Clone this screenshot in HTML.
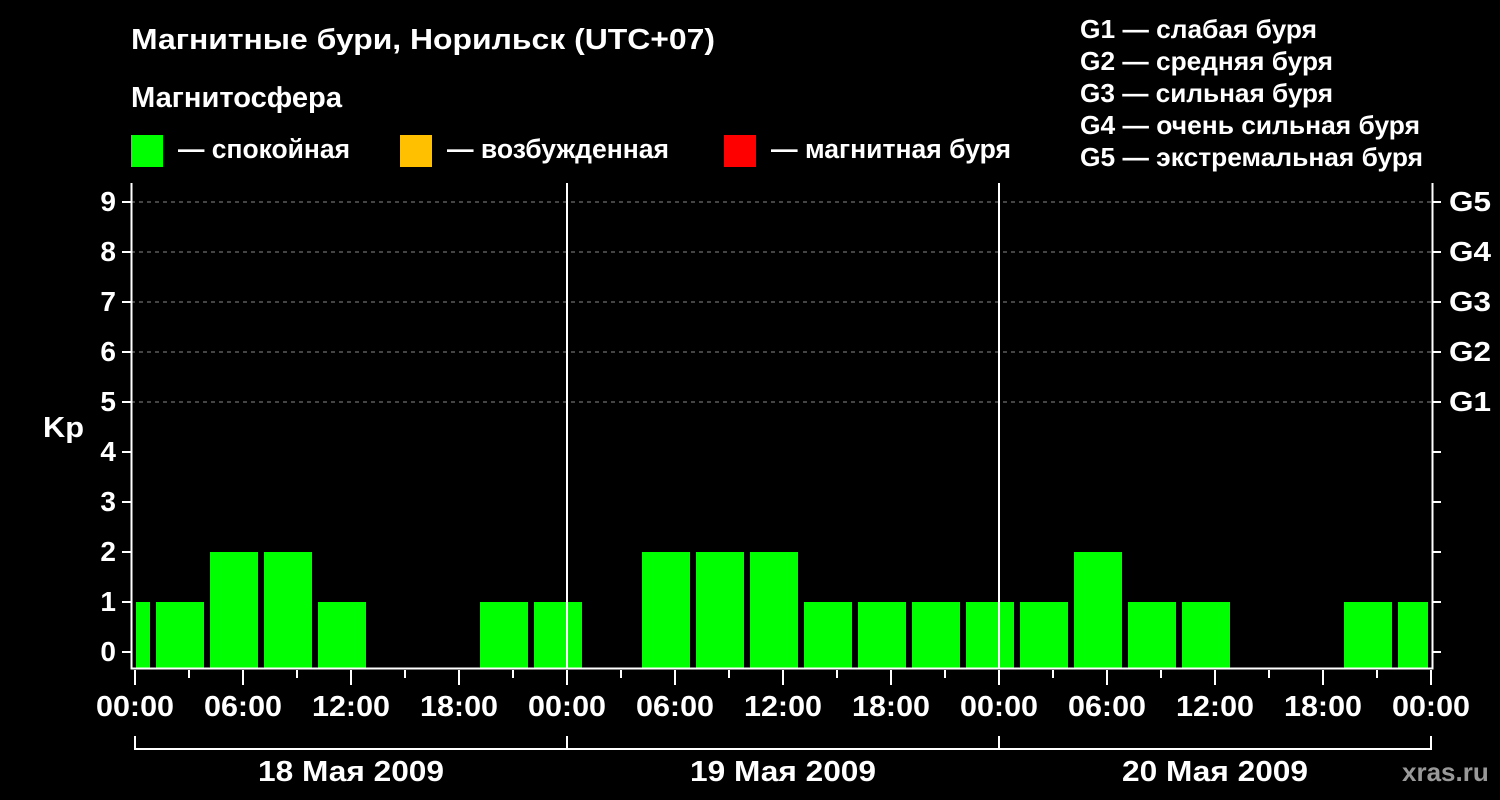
<!DOCTYPE html>
<html><head><meta charset="utf-8"><style>html,body{margin:0;padding:0;background:#000}svg{display:block}</style></head><body>
<svg width="1500" height="800" xmlns="http://www.w3.org/2000/svg" font-family="Liberation Sans, sans-serif" font-weight="bold" fill="#fff">
<rect width="1500" height="800" fill="#000"/>
<text x="131" y="49" font-size="29" textLength="584" lengthAdjust="spacingAndGlyphs">Магнитные бури, Норильск (UTC+07)</text>
<text x="131" y="107" font-size="29" textLength="211" lengthAdjust="spacingAndGlyphs">Магнитосфера</text>
<rect x="131" y="135" width="32" height="32" fill="#00ff00"/>
<text x="178" y="158" font-size="27" textLength="172" lengthAdjust="spacingAndGlyphs">— спокойная</text>
<rect x="400" y="135" width="32" height="32" fill="#ffc000"/>
<text x="447" y="158" font-size="27" textLength="222" lengthAdjust="spacingAndGlyphs">— возбужденная</text>
<rect x="724" y="135" width="32" height="32" fill="#ff0000"/>
<text x="771" y="158" font-size="27" textLength="240" lengthAdjust="spacingAndGlyphs">— магнитная буря</text>
<g font-size="26" lengthAdjust="spacingAndGlyphs">
<text x="1080" y="38" textLength="237" lengthAdjust="spacingAndGlyphs">G1 — слабая буря</text>
<text x="1080" y="70" textLength="253" lengthAdjust="spacingAndGlyphs">G2 — средняя буря</text>
<text x="1080" y="102" textLength="253" lengthAdjust="spacingAndGlyphs">G3 — сильная буря</text>
<text x="1080" y="134" textLength="340" lengthAdjust="spacingAndGlyphs">G4 — очень сильная буря</text>
<text x="1080" y="166" textLength="343" lengthAdjust="spacingAndGlyphs">G5 — экстремальная буря</text>
</g>
<g stroke="#888" stroke-dasharray="4,4" stroke-width="1">
<line x1="131" y1="202" x2="1433" y2="202"/><line x1="131" y1="252" x2="1433" y2="252"/>
<line x1="131" y1="302" x2="1433" y2="302"/><line x1="131" y1="352" x2="1433" y2="352"/>
<line x1="131" y1="402" x2="1433" y2="402"/>
</g>
<g fill="#00ff00">
<rect x="136" y="602" width="14" height="66"/>
<rect x="156" y="602" width="48" height="66"/>
<rect x="210" y="552" width="48" height="116"/>
<rect x="264" y="552" width="48" height="116"/>
<rect x="318" y="602" width="48" height="66"/>
<rect x="480" y="602" width="48" height="66"/>
<rect x="534" y="602" width="48" height="66"/>
<rect x="642" y="552" width="48" height="116"/>
<rect x="696" y="552" width="48" height="116"/>
<rect x="750" y="552" width="48" height="116"/>
<rect x="804" y="602" width="48" height="66"/>
<rect x="858" y="602" width="48" height="66"/>
<rect x="912" y="602" width="48" height="66"/>
<rect x="966" y="602" width="48" height="66"/>
<rect x="1020" y="602" width="48" height="66"/>
<rect x="1074" y="552" width="48" height="116"/>
<rect x="1128" y="602" width="48" height="66"/>
<rect x="1182" y="602" width="48" height="66"/>
<rect x="1344" y="602" width="48" height="66"/>
<rect x="1398" y="602" width="30" height="66"/>
</g>
<g stroke="#fff" stroke-width="2" fill="none">
<path d="M131.5 183V668.5H1432.5V183"/>
<line x1="567" y1="183" x2="567" y2="668"/><line x1="999" y1="183" x2="999" y2="668"/>
<path d="M122 652h9M122 602h9M122 552h9M122 502h9M122 452h9M122 402h9M122 352h9M122 302h9M122 252h9M122 202h9"/>
<path d="M1433 652h8M1433 602h8M1433 552h8M1433 502h8M1433 452h8M1433 402h8M1433 352h8M1433 302h8M1433 252h8M1433 202h8"/>
<path d="M135 670v15M243 670v15M351 670v15M459 670v15M567 670v15M675 670v15M783 670v15M891 670v15M999 670v15M1107 670v15M1215 670v15M1323 670v15M1431 670v15"/>
<path d="M189 670v8M297 670v8M405 670v8M513 670v8M621 670v8M729 670v8M837 670v8M945 670v8M1053 670v8M1161 670v8M1269 670v8M1377 670v8"/>
<path d="M135 736v13H1431V736M567 736v13M999 736v13"/>
</g>
<g font-size="28" text-anchor="end">
<text x="116" y="661">0</text><text x="116" y="611">1</text><text x="116" y="561">2</text><text x="116" y="511">3</text><text x="116" y="461">4</text><text x="116" y="411">5</text><text x="116" y="361">6</text><text x="116" y="311">7</text><text x="116" y="261">8</text><text x="116" y="211">9</text>
</g>
<text x="43" y="437" font-size="29" textLength="41" lengthAdjust="spacingAndGlyphs">Kp</text>
<g font-size="28">
<text x="1449" y="411" textLength="42" lengthAdjust="spacingAndGlyphs">G1</text><text x="1449" y="361" textLength="42" lengthAdjust="spacingAndGlyphs">G2</text><text x="1449" y="311" textLength="42" lengthAdjust="spacingAndGlyphs">G3</text><text x="1449" y="261" textLength="42" lengthAdjust="spacingAndGlyphs">G4</text><text x="1449" y="211" textLength="42" lengthAdjust="spacingAndGlyphs">G5</text>
</g>
<g font-size="29">
<text x="96" y="716" textLength="78" lengthAdjust="spacingAndGlyphs">00:00</text><text x="204" y="716" textLength="78" lengthAdjust="spacingAndGlyphs">06:00</text><text x="312" y="716" textLength="78" lengthAdjust="spacingAndGlyphs">12:00</text><text x="420" y="716" textLength="78" lengthAdjust="spacingAndGlyphs">18:00</text>
<text x="528" y="716" textLength="78" lengthAdjust="spacingAndGlyphs">00:00</text><text x="636" y="716" textLength="78" lengthAdjust="spacingAndGlyphs">06:00</text><text x="744" y="716" textLength="78" lengthAdjust="spacingAndGlyphs">12:00</text><text x="852" y="716" textLength="78" lengthAdjust="spacingAndGlyphs">18:00</text>
<text x="960" y="716" textLength="78" lengthAdjust="spacingAndGlyphs">00:00</text><text x="1068" y="716" textLength="78" lengthAdjust="spacingAndGlyphs">06:00</text><text x="1176" y="716" textLength="78" lengthAdjust="spacingAndGlyphs">12:00</text><text x="1284" y="716" textLength="78" lengthAdjust="spacingAndGlyphs">18:00</text>
<text x="1392" y="716" textLength="78" lengthAdjust="spacingAndGlyphs">00:00</text>
<text x="258" y="781" textLength="186" lengthAdjust="spacingAndGlyphs">18 Мая 2009</text><text x="690" y="781" textLength="186" lengthAdjust="spacingAndGlyphs">19 Мая 2009</text><text x="1122" y="781" textLength="186" lengthAdjust="spacingAndGlyphs">20 Мая 2009</text>
</g>
<text x="1402" y="781" font-size="26" fill="#999">xras.ru</text>
</svg>
</body></html>
